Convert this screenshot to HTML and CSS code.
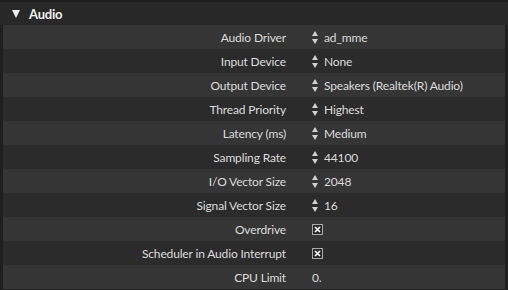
FILE: index.html
```html
<!DOCTYPE html>
<html lang="en">
<head>
    <meta charset="UTF-8">
    <meta name="viewport" content="width=device-width, initial-scale=1.0">
    <title>Audio</title>
    <link rel="stylesheet" href="styles.css">
</head>
<body>
    <div class="inspector">
        <div class="section-title">
            <span class="arrow"></span>
            <span>Audio</span>
        </div>
        <div class="rows">
            <div class="row"><div class="label">Audio Driver</div><div class="value"><span class="spin"></span>ad_mme</div></div>
            <div class="row"><div class="label">Input Device</div><div class="value"><span class="spin"></span>None</div></div>
            <div class="row"><div class="label">Output Device</div><div class="value"><span class="spin"></span>Speakers (Realtek(R) Audio)</div></div>
            <div class="row"><div class="label">Thread Priority</div><div class="value"><span class="spin"></span>Highest</div></div>
            <div class="row"><div class="label">Latency (ms)</div><div class="value"><span class="spin"></span>Medium</div></div>
            <div class="row"><div class="label">Sampling Rate</div><div class="value"><span class="spin"></span>44100</div></div>
            <div class="row"><div class="label">I/O Vector Size</div><div class="value"><span class="spin"></span>2048</div></div>
            <div class="row"><div class="label">Signal Vector Size</div><div class="value"><span class="spin"></span>16</div></div>
            <div class="row"><div class="label">Overdrive</div><div class="value">
                <svg class="check" width="11" height="11" viewBox="0 0 11 11"><rect x="0.5" y="0.5" width="10" height="10" fill="#2a2a2a" stroke="#a8a8a8"/><path d="M3 3L8 8M8 3L3 8" stroke="#fff" stroke-width="1.6"/></svg>
            </div></div>
            <div class="row"><div class="label">Scheduler in Audio Interrupt</div><div class="value">
                <svg class="check" width="11" height="11" viewBox="0 0 11 11"><rect x="0.5" y="0.5" width="10" height="10" fill="#2a2a2a" stroke="#a8a8a8"/><path d="M3 3L8 8M8 3L3 8" stroke="#fff" stroke-width="1.6"/></svg>
            </div></div>
            <div class="row"><div class="label">CPU Limit</div><div class="value">0.</div></div>
        </div>
    </div>
</body>
</html>
```

FILE: styles.css
```css
body {
    margin: 0;
    background: #1f1f1f;
    font-family: Lato, "Liberation Sans", sans-serif;
    color: #dcdcdc;
}
.inspector {
    padding-top: 2px;
}
.section-title {
    height: 23px;
    background: #282828;
    display: flex;
    align-items: center;
    gap: 9px;
    padding-left: 12px;
    font-size: 13px;
    font-weight: bold;
    letter-spacing: -0.2px;
    color: #f0f0f0;
}
.arrow {
    width: 0;
    height: 0;
    border-left: 4.5px solid transparent;
    border-right: 4.5px solid transparent;
    border-top: 8px solid #f0f0f0;
}
.rows {
    margin: 0 3px;
}
.row {
    height: 24px;
    display: grid;
    grid-template-columns: 283px 1fr;
    column-gap: 26px;
    align-items: center;
    font-size: 12px;
    letter-spacing: -0.15px;
    background: #2b2b2b;
}
.row:nth-child(odd) {
    background: #353535;
}
.label {
    text-align: right;
}
.value {
    display: flex;
    align-items: center;
    gap: 6px;
}
.spin {
    width: 6px;
    height: 15px;
    position: relative;
}
.spin::before, .spin::after {
    content: '';
    position: absolute;
    left: 0;
    border-left: 3px solid transparent;
    border-right: 3px solid transparent;
}
.spin::before {
    top: 1px;
    border-bottom: 5px solid #d0d0d0;
}
.spin::after {
    bottom: 1px;
    border-top: 5px solid #d0d0d0;
}
.check {
    display: block;
}
```
